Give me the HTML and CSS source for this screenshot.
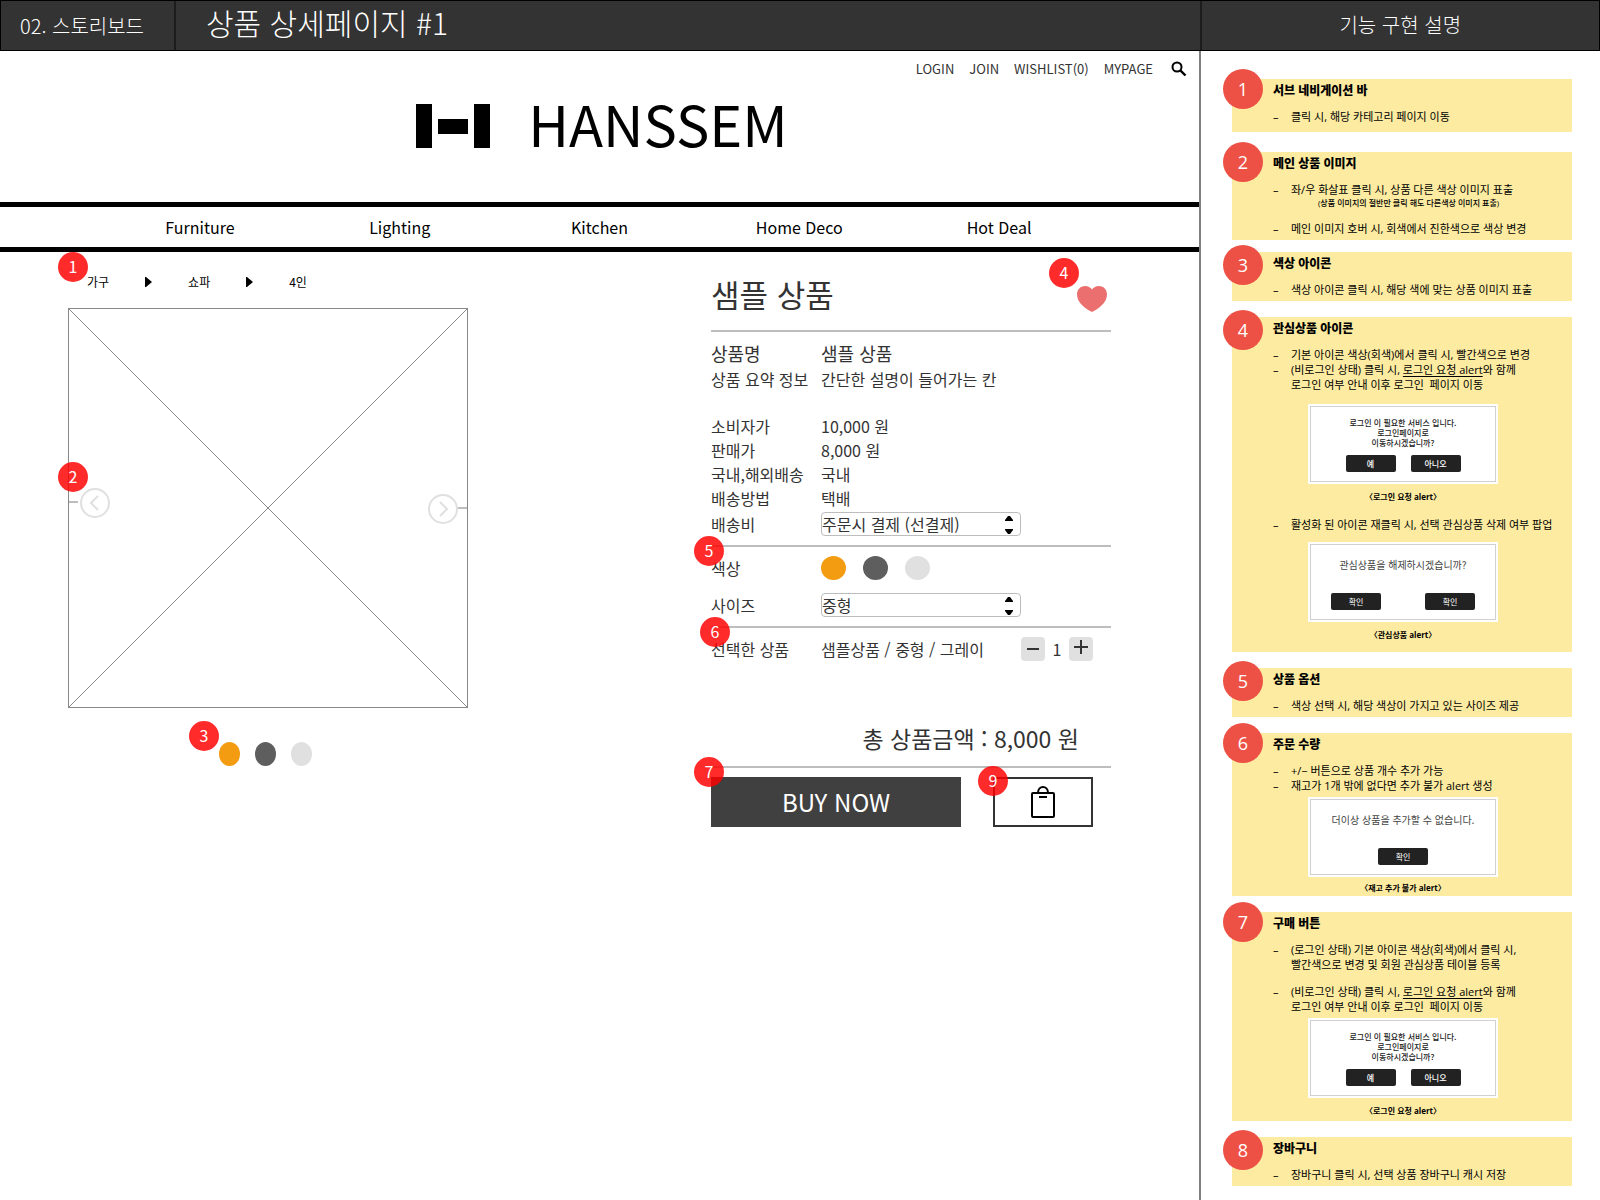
FILE: index.html
```html
<!DOCTYPE html>
<html lang="ko">
<head>
<meta charset="utf-8">
<meta name="viewport" content="width=device-width, initial-scale=1">
<title>상품 상세페이지 #1</title>
<link rel="stylesheet" href="styles.css">
</head>
<body>
<header class="board-bar">
  <div class="board-bar__chapter">02. 스토리보드</div>
  <h1 class="board-bar__title">상품 상세페이지 #1</h1>
  <h2 class="board-bar__aside">기능 구현 설명</h2>
</header>

<div class="board">
  <main class="shop">
    <nav class="util" aria-label="회원 메뉴">
      <a href="#">LOGIN</a>
      <a href="#">JOIN</a>
      <a href="#">WISHLIST(0)</a>
      <a href="#">MYPAGE</a>
      <button class="util__search" type="button" aria-label="검색">
        <svg width="16" height="16" viewBox="0 0 16 16" fill="none" stroke="#000" stroke-width="2"><circle cx="6" cy="6" r="4.5"/><path d="M9.3 9.3L14.5 14.5" stroke-width="2.4"/></svg>
      </button>
    </nav>

    <a class="logo" href="#">
      <svg class="logo__mark" width="74" height="44" viewBox="0 0 74 44" aria-hidden="true"><path d="M0 0h16v44H0zM22 15h30v15H22zM58 0h16v44H58z"/></svg>
      <span class="logo__name">HANSSEM</span>
    </a>

    <nav class="menu" aria-label="카테고리">
      <a href="#">Furniture</a>
      <a href="#">Lighting</a>
      <a href="#">Kitchen</a>
      <a href="#">Home Deco</a>
      <a href="#">Hot Deal</a>
    </nav>

    <div class="product">
      <section class="gallery">
        <nav class="crumbs" aria-label="현재 위치">
          <span class="pin pin--crumbs">1</span>
          <a href="#">가구</a>
          <svg width="7" height="10" viewBox="0 0 7 10"><path d="M0 0h1l6 5-6 5H0z"/></svg>
          <a href="#">쇼파</a>
          <svg width="7" height="10" viewBox="0 0 7 10"><path d="M0 0h1l6 5-6 5H0z"/></svg>
          <a href="#">4인</a>
        </nav>
        <div class="frame">
          <svg class="frame__cross" viewBox="0 0 398 398" preserveAspectRatio="none" aria-hidden="true"><path d="M0 0L398 398M398 0L0 398"/></svg>
          <span class="pin pin--frame">2</span>
          <button class="arrow arrow--prev" type="button" aria-label="이전 이미지">
            <svg width="41" height="30" viewBox="0 0 41 30" fill="none" stroke="#e0e0e0" stroke-width="2"><path d="M0 14h9" stroke="#bdbdbd"/><circle cx="26" cy="15" r="14"/><path d="M29 8l-7 7 7 7"/></svg>
          </button>
          <button class="arrow arrow--next" type="button" aria-label="다음 이미지">
            <svg width="39" height="30" viewBox="0 0 39 30" fill="none" stroke="#e0e0e0" stroke-width="2"><path d="M30 14h9" stroke="#bdbdbd"/><circle cx="15" cy="15" r="14"/><path d="M12 8l7 7-7 7"/></svg>
          </button>
        </div>
        <div class="dots">
          <span class="pin pin--dots">3</span>
          <button class="dot dot--orange" type="button" aria-label="오렌지"></button>
          <button class="dot dot--gray" type="button" aria-label="그레이"></button>
          <button class="dot dot--light" type="button" aria-label="라이트 그레이"></button>
        </div>
      </section>

      <section class="detail">
        <div class="detail__head">
          <h2>샘플 상품</h2>
          <span class="pin pin--heart">4</span>
          <button class="heart" type="button" aria-label="관심상품">
            <svg width="30" height="26" viewBox="0 0 30 26" fill="#ec6f6f"><path d="M15 26C9 23 0 17 0 8.500C0 3.500 3.500 0 8 0C11 0 13.500 1.500 15 3.500C16.500 1.500 19 0 22 0C26.500 0 30 3.500 30 8.500C30 17 21 23 15 26z"/></svg>
          </button>
        </div>

        <div class="info">
          <div class="row row--name"><span>상품명</span><span>샘플 상품</span></div>
          <div class="row row--summary"><span>상품 요약 정보</span><span>간단한 설명이 들어가는 칸</span></div>
          <div class="row"><span>소비자가</span><span>10,000 원</span></div>
          <div class="row"><span>판매가</span><span>8,000 원</span></div>
          <div class="row"><span>국내,해외배송</span><span>국내</span></div>
          <div class="row"><span>배송방법</span><span>택배</span></div>
          <div class="row row--fee">
            <label for="fee">배송비</label>
            <span class="picker">
              <select id="fee"><option>주문시 결제 (선결제)</option></select>
              <svg width="8" height="18" viewBox="0 0 8 18"><path d="M0 5v-1l3-4h2l3 4v1zM0 13v1l3 4h2l3-4v-1z"/></svg>
            </span>
          </div>
        </div>

        <div class="options">
          <span class="pin pin--left">5</span>
          <div class="row">
            <span>색상</span>
            <span class="chips">
              <button class="chip dot--orange" type="button" aria-label="오렌지"></button>
              <button class="chip dot--gray" type="button" aria-label="그레이"></button>
              <button class="chip dot--light" type="button" aria-label="라이트 그레이"></button>
            </span>
          </div>
          <div class="row">
            <label for="size">사이즈</label>
            <span class="picker">
              <select id="size"><option>중형</option></select>
              <svg width="8" height="18" viewBox="0 0 8 18"><path d="M0 5v-1l3-4h2l3 4v1zM0 13v1l3 4h2l3-4v-1z"/></svg>
            </span>
          </div>
        </div>

        <div class="chosen">
          <span class="pin pin--chosen">6</span>
          <div class="row">
            <span>선택한 상품</span>
            <span>샘플상품 / 중형 / 그레이</span>
            <span class="stepper">
              <button type="button" aria-label="수량 감소"><svg width="14" height="14" viewBox="0 0 14 14"><path d="M1 7h12"/></svg></button>
              <output>1</output>
              <button type="button" aria-label="수량 증가"><svg width="14" height="14" viewBox="0 0 14 14"><path d="M0 5h14M7 -2v14"/></svg></button>
            </span>
          </div>
        </div>

        <p class="total">총 상품금액 : 8,000 원</p>

        <div class="actions">
          <span class="pin pin--left">7</span>
          <button class="buy" type="button">BUY NOW</button>
          <button class="cart" type="button" aria-label="장바구니">
            <span class="pin pin--cart">9</span>
            <svg width="24" height="32" viewBox="0 0 24 32" fill="none" stroke="#000" stroke-width="2"><rect x="1" y="7" width="22" height="24" rx="1"/><path d="M7 7C7 -1 17 -1 17 7"/><path d="M8 11h8"/></svg>
          </button>
        </div>
      </section>
    </div>
  </main>

  <aside class="notes">
    <section class="note note--first">
      <span class="note__num note__num--high">1</span>
      <h3>서브 네비게이션 바</h3>
      <ul><li>클릭 시, 해당 카테고리 페이지 이동</li></ul>
    </section>

    <section class="note note--gap-20">
      <span class="note__num note__num--high">2</span>
      <h3>메인 상품 이미지</h3>
      <ul>
        <li>좌/우 화살표 클릭 시, 상품 다른 색상 이미지 표출<small>(상품 이미지의 절반만 클릭 해도 다른색상 이미지 표출)</small></li>
        <li class="spaced">메인 이미지 호버 시, 회색에서 진한색으로 색상 변경</li>
      </ul>
    </section>

    <section class="note note--gap-12">
      <span class="note__num">3</span>
      <h3>색상 아이콘</h3>
      <ul><li>색상 아이콘 클릭 시, 해당 색에 맞는 상품 이미지 표출</li></ul>
    </section>

    <section class="note note--tall">
      <span class="note__num">4</span>
      <h3>관심상품 아이콘</h3>
      <ul>
        <li>기본 아이콘 색상(회색)에서 클릭 시, 빨간색으로 변경</li>
        <li>(비로그인 상태) 클릭 시, <u>로그인 요청 alert</u>와 함께<br>로그인 여부 안내 이후 로그인&nbsp; 페이지 이동</li>
      </ul>
      <figure class="figure--loose">
        <div class="alert alert--login">
          <p>로그인 이 필요한 서비스 입니다.<br>로그인페이지로<br>이동하시겠습니까?</p>
          <div class="alert__buttons"><button type="button">예</button><button type="button">아니오</button></div>
        </div>
        <figcaption>〈로그인 요청 alert〉</figcaption>
      </figure>
      <ul class="list--after"><li>활성화 된 아이콘 재클릭 시, 선택 관심상품 삭제 여부 팝업</li></ul>
      <figure class="figure--mid">
        <div class="alert alert--wide">
          <p>관심상품을 해제하시겠습니까?</p>
          <div class="alert__buttons"><button type="button">확인</button><button type="button">확인</button></div>
        </div>
        <figcaption>〈관심상품 alert〉</figcaption>
      </figure>
    </section>

    <section class="note">
      <span class="note__num">5</span>
      <h3>상품 옵션</h3>
      <ul><li>색상 선택 시, 해당 색상이 가지고 있는 사이즈 제공</li></ul>
    </section>

    <section class="note note--compact">
      <span class="note__num note__num--high">6</span>
      <h3>주문 수량</h3>
      <ul>
        <li>+/− 버튼으로 상품 개수 추가 가능</li>
        <li>재고가 1개 밖에 없다면 추가 불가 alert 생성</li>
      </ul>
      <figure>
        <div class="alert alert--wide">
          <p>더이상 상품을 추가할 수 없습니다.</p>
          <div class="alert__buttons"><button type="button">확인</button></div>
        </div>
        <figcaption>〈재고 추가 불가 alert〉</figcaption>
      </figure>
    </section>

    <section class="note">
      <span class="note__num note__num--high">7</span>
      <h3>구매 버튼</h3>
      <ul>
        <li>(로그인 상태) 기본 아이콘 색상(회색)에서 클릭 시,<br>빨간색으로 변경 및 회원 관심상품 테이블 등록</li>
        <li class="spaced">(비로그인 상태) 클릭 시, <u>로그인 요청 alert</u>와 함께<br>로그인 여부 안내 이후 로그인&nbsp; 페이지 이동</li>
      </ul>
      <figure>
        <div class="alert alert--login">
          <p>로그인 이 필요한 서비스 입니다.<br>로그인페이지로<br>이동하시겠습니까?</p>
          <div class="alert__buttons"><button type="button">예</button><button type="button">아니오</button></div>
        </div>
        <figcaption>〈로그인 요청 alert〉</figcaption>
      </figure>
    </section>

    <section class="note">
      <span class="note__num">8</span>
      <h3>장바구니</h3>
      <ul><li>장바구니 클릭 시, 선택 상품 장바구니 캐시 저장</li></ul>
    </section>
  </aside>
</div>
</body>
</html>
```
FILE: styles.css
```css
* {
  box-sizing: border-box;
}

body {
  margin: 0;
  min-height: 100vh;
  display: flex;
  flex-direction: column;
  background: #fff;
  color: #333;
  font-family: "Noto Sans CJK KR", sans-serif;
  font-size: 16px;
  line-height: 24px;
}

h1, h2, h3, p, ul, figure {
  margin: 0;
  padding: 0;
  font-weight: 400;
}

ul {
  list-style: none;
}

a {
  color: inherit;
  text-decoration: none;
}

button {
  margin: 0;
  padding: 0;
  border: 0;
  background: none;
  font: inherit;
  color: inherit;
}

svg {
  display: block;
}

/* top bar */
.board-bar {
  display: grid;
  grid-template-columns: 175px 1fr 25%;
  border: 1px solid #000;
  background: #333;
  color: #fff;
  font-weight: 300;
  line-height: 49px;
}

.board-bar__chapter {
  padding-left: 19px;
  border-right: 2px solid #1c1c1c;
  font-size: 20px;
}

.board-bar__title {
  padding-left: 30px;
  font-size: 30px;
  font-weight: 300;
  line-height: 43px;
}

.board-bar__aside {
  border-left: 2px solid #1c1c1c;
  font-size: 20px;
  font-weight: 300;
  line-height: 48px;
  text-align: center;
}

.board {
  flex: 1;
  display: grid;
  grid-template-columns: 3fr 1fr;
}

/* shop header */
.shop {
  border-right: 1px solid #808080;
}

.util {
  display: flex;
  justify-content: flex-end;
  align-items: center;
  gap: 15px;
  padding: 6px 12px 0 0;
  font-size: 13px;
}

.util__search {
  margin-left: 3px;
}

.logo {
  display: flex;
  justify-content: center;
  gap: 38px;
  height: 44px;
  margin: 23px 0 54px;
  padding-left: 5px;
  color: #000;
}

.logo__name {
  font-size: 56px;
  line-height: 38px;
}

.menu {
  display: grid;
  grid-template-columns: repeat(5, 1fr);
  padding: 8px 100px;
  border-top: 5px solid #000;
  border-bottom: 5px solid #000;
  color: #000;
  text-align: center;
}

/* numbered pins over the mock-up */
.pin {
  position: absolute;
  z-index: 1;
  width: 30px;
  height: 30px;
  border-radius: 50%;
  background: rgba(255, 0, 0, 0.83);
  color: #fff;
  font-size: 16px;
  line-height: 29px;
  text-align: center;
}

.pin--crumbs { left: -10px; top: -18px; }
.pin--frame { left: -11px; top: 153px; }
.pin--dots { left: 121px; top: -21px; }
.pin--heart { right: 32px; top: -12px; }
.pin--left { left: -17px; top: -11px; }
.pin--chosen { left: -11px; top: -11px; }
.pin--cart { left: -17px; top: -13px; }

/* product */
.product {
  display: flex;
  justify-content: space-between;
  padding: 18px 88px 0 68px;
}

.gallery,
.detail {
  width: 400px;
}

.crumbs {
  position: relative;
  display: flex;
  align-items: center;
  gap: 36px;
  padding-left: 19px;
  color: #000;
  font-size: 12px;
}

.frame {
  position: relative;
  margin-top: 14px;
  border: 1px solid #888;
}

.frame__cross {
  width: 100%;
  height: auto;
  fill: none;
  stroke: #888;
}

.arrow {
  position: absolute;
}

.arrow--prev { left: 0; top: 179px; }
.arrow--next { right: 0; top: 185px; }

.dots {
  position: relative;
  display: flex;
  gap: 15px;
  margin-top: 34px;
  padding-left: 151px;
}

.dot {
  width: 21px;
  height: 24px;
  border-radius: 50%;
}

.dot--orange { background: #f39c12; }
.dot--gray { background: #5e5e5e; }
.dot--light { background: #e0e0e0; }

.detail__head {
  position: relative;
  display: flex;
  justify-content: space-between;
  align-items: center;
  padding: 0 4px 12px 0;
  border-bottom: 2px solid #bdbdbd;
}

.detail__head h2 {
  font-size: 31px;
  line-height: 48px;
}

.heart {
  margin-top: 10px;
}

.row {
  display: grid;
  grid-template-columns: 110px 1fr auto;
  align-items: center;
  white-space: nowrap;
}

.info {
  padding: 7px 0 9px;
  border-bottom: 2px solid #bdbdbd;
}

.row--name {
  font-size: 18px;
  line-height: 28px;
}

.row--summary {
  margin-bottom: 23px;
}

.row--fee {
  margin-top: 2px;
}

.picker {
  position: relative;
  width: 200px;
}

.picker select {
  appearance: none;
  display: block;
  width: 100%;
  height: 24px;
  padding: 0;
  border: 1px solid #bdbdbd;
  border-radius: 4px;
  background: #fff;
  color: #333;
  font: inherit;
  line-height: 22px;
}

.picker svg {
  position: absolute;
  right: 8px;
  top: 4px;
}

.options {
  position: relative;
  display: grid;
  gap: 13px;
  padding: 9px 0;
  border-bottom: 2px solid #bdbdbd;
}

.chips {
  display: flex;
  gap: 17px;
}

.chip {
  width: 25px;
  height: 24px;
  border-radius: 50%;
}

.chosen {
  position: relative;
  padding: 9px 18px 0 0;
}

.stepper {
  display: flex;
  text-align: center;
}

.stepper output {
  width: 24px;
}

.stepper button {
  display: grid;
  place-items: center;
  width: 24px;
  height: 24px;
  border-radius: 4px;
  background: #e0e0e0;
}

.stepper svg {
  overflow: visible;
}

.stepper path {
  stroke: #333;
  stroke-width: 2;
}

.total {
  padding: 59px 32px 10px 0;
  border-bottom: 2px solid #bdbdbd;
  font-size: 23px;
  line-height: 36px;
  text-align: right;
}

.actions {
  position: relative;
  display: flex;
  justify-content: space-between;
  padding: 9px 18px 0 0;
}

.buy {
  width: 250px;
  height: 50px;
  background: #404040;
  color: #fff;
  font-size: 24px;
}

.cart {
  position: relative;
  display: grid;
  place-items: center;
  width: 100px;
  height: 50px;
  border: 2px solid #333;
}

/* notes column */
.notes {
  padding: 28px 28px 12px 31px;
  border-left: 1px solid #808080;
  color: #000;
  font-family: "Open Sans", "Noto Sans CJK KR", sans-serif;
  font-size: 11px;
  font-weight: 500;
  line-height: 15px;
}

.note {
  position: relative;
  margin-top: 16px;
  padding: 4px 0 4px 41px;
  background: #fceba0;
  white-space: nowrap;
}

.note--first { margin-top: 0; padding-bottom: 8px; }
.note--gap-12 { margin-top: 12px; }
.note--gap-20 { margin-top: 20px; }
.note--tall { padding-bottom: 11px; }
.note--compact { padding-bottom: 2px; }

.note__num {
  position: absolute;
  left: -9px;
  top: -7px;
  width: 40px;
  height: 40px;
  border-radius: 50%;
  background: #ed5145;
  color: #fff;
  font-size: 18px;
  font-weight: 400;
  line-height: 40px;
  text-align: center;
}

.note__num--high {
  top: -10px;
}

.note h3 {
  margin-bottom: 10px;
  font-size: 12px;
  font-weight: 900;
  line-height: 16px;
}

.note li {
  padding-left: 18px;
  text-indent: -18px;
}

.note li::before {
  content: "–";
  display: inline-block;
  width: 18px;
  text-indent: 0;
}

.note li.spaced {
  margin-top: 12px;
}

.note small {
  display: block;
  padding-left: 27px;
  font-size: 8px;
  font-weight: 500;
  line-height: 12px;
  text-indent: 0;
}

.note u {
  text-underline-offset: 2px;
}

.note figure {
  width: 190px;
  margin: 4px 0 0 35px;
}

.note .figure--mid { margin-top: 10px; }
.note .figure--loose { margin-top: 12px; }
.note .list--after { margin-top: 14px; }

.note figcaption {
  margin-top: 7px;
  font-size: 8px;
  font-weight: 700;
  line-height: 12px;
  text-align: center;
}

.note--compact figcaption {
  margin-top: 5px;
}

.alert {
  height: 80px;
  border: 1px solid #fff;
  outline: 1px solid #d0d0d0;
  outline-offset: -3px;
  background: #fff;
  color: #222;
  font-family: "Noto Sans CJK KR", sans-serif;
  font-size: 8px;
  line-height: 10px;
  text-align: center;
}

.alert__buttons {
  display: flex;
  justify-content: center;
}

.alert button {
  width: 50px;
  height: 17px;
  border-radius: 2px;
  background: #222;
  color: #fff;
}

.alert--login {
  padding-top: 13px;
}

.alert--login p {
  font-weight: 500;
}

.alert--login .alert__buttons {
  gap: 15px;
  margin-top: 7px;
  font-weight: 500;
}

.alert--wide {
  padding-top: 14px;
  font-weight: 400;
}

.alert--wide p {
  color: #444;
  font-size: 10px;
  line-height: 16px;
}

.alert--wide .alert__buttons {
  gap: 44px;
  margin-top: 20px;
}
```
